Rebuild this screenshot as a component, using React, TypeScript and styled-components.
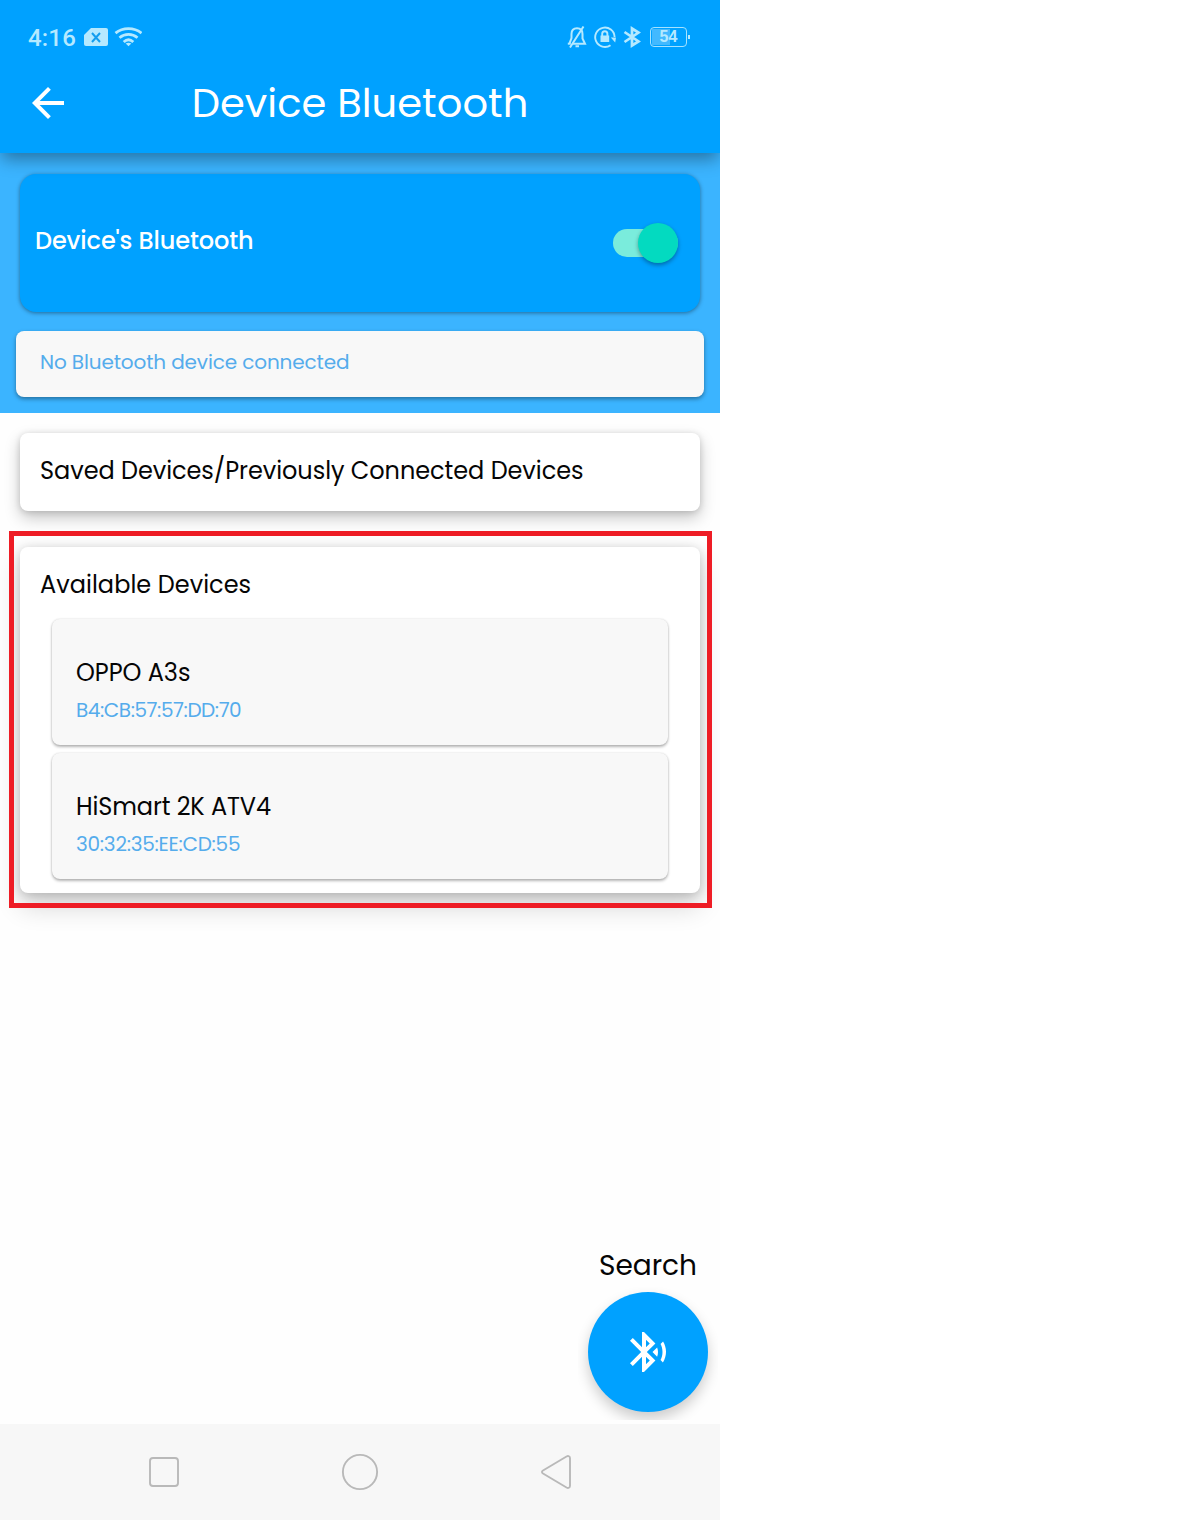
import React from "react";
import styled, { createGlobalStyle } from "styled-components";

const GlobalStyle = createGlobalStyle`
  * { box-sizing: border-box; }
  body { margin: 0; background: #fff; }
`;

const Screen = styled.div`
  width: 720px;
  height: 1520px;
  display: flex;
  flex-direction: column;
  overflow: hidden;
  background: #fefefe;
  color: #050505;
  font-family: Poppins, Inter, "Open Sans", sans-serif;
`;

const Header = styled.header`
  position: relative;
  z-index: 1;
  flex: none;
  height: 153px;
  background: #00a1ff;
  box-shadow: 0 8px 16px -2px rgba(0, 0, 0, 0.36);
`;

const StatusBar = styled.div`
  height: 74px;
  padding: 0 30px 0 28px;
  display: flex;
  align-items: center;
  justify-content: space-between;
  color: #b5e9ff;
`;

const StatusGroup = styled.div<{ $gap: number }>`
  display: flex;
  align-items: center;
  gap: ${(p) => p.$gap}px;
`;

const Clock = styled.span`
  width: 49px;
  font: 500 24px/30px Roboto, sans-serif;
  letter-spacing: 0.2px;
  margin-right: 1px;
  padding-top: 2px;
`;

const Battery = styled.div`
  display: flex;
  align-items: center;
  gap: 1px;
  margin-left: 2px;
`;

const BatteryCell = styled.div`
  width: 37px;
  height: 20px;
  border: 1px solid #a5e2ff;
  border-radius: 4px;
  background: linear-gradient(90deg, #42b9ff 18px, transparent 18px) 1px 1px / 34px 16px no-repeat;
  font: 700 16px/18px "Liberation Sans", sans-serif;
  text-align: center;
`;

const BatteryTip = styled.div`
  width: 2px;
  height: 4px;
  background: #b5e9ff;
`;

const TitleBar = styled.div`
  display: grid;
  grid-template-columns: 96px 1fr 96px;
  height: 58px;
  align-items: center;
`;

const BackButton = styled.button`
  display: flex;
  justify-content: center;
  border: 0;
  padding: 0;
  background: none;
  color: #fff;
`;

const Label = styled.span<{ $size: number; $spacing?: number; $color?: string; $weight?: number }>`
  display: block;
  white-space: nowrap;
  font-size: ${(p) => p.$size}px;
  line-height: 1.4;
  letter-spacing: ${(p) => p.$spacing ?? 0}px;
  color: ${(p) => p.$color ?? "#050505"};
  font-weight: ${(p) => p.$weight ?? 400};
`;

const TitleSlot = styled.div`
  display: flex;
  justify-content: center;
`;

const Hero = styled.section`
  flex: none;
  height: 260px;
  padding: 21px 16px 0;
  background: #3bb4ff;
`;

const ToggleCard = styled.div`
  height: 138px;
  margin: 0 4px 19px 4px;
  padding: 0 22px 0 15px;
  display: flex;
  align-items: center;
  justify-content: space-between;
  border-radius: 16px;
  background: #00a1ff;
  box-shadow: 0 1px 4px rgba(0, 0, 0, 0.42);
`;

const ToggleText = styled.div`
  padding-bottom: 5px;
`;

const SwitchTrack = styled.div`
  width: 65px;
  height: 28px;
  display: flex;
  align-items: center;
  justify-content: flex-end;
  border-radius: 14px;
  background: #7aecdc;
`;

const SwitchThumb = styled.div`
  flex: none;
  width: 40px;
  height: 40px;
  border-radius: 50%;
  background: #03dac0;
  box-shadow: 0 2px 4px rgba(0, 0, 0, 0.35);
`;

const ConnectionCard = styled.div`
  height: 66px;
  padding: 0 24px 4px;
  display: flex;
  align-items: center;
  border-radius: 8px;
  background: #f8f8f8;
  box-shadow: 0 2px 4px rgba(0, 0, 0, 0.38);
`;

const Content = styled.main`
  flex: 1;
  display: flex;
  flex-direction: column;
`;

const SavedCard = styled.section`
  height: 78px;
  margin: 20px 20px 0;
  padding: 0 20px 3px;
  display: flex;
  align-items: center;
  border-radius: 8px;
  background: #fff;
  box-shadow: 0 7px 16px rgba(0, 0, 0, 0.22), 0 1px 6px rgba(0, 0, 0, 0.15);
`;

const Highlight = styled.section`
  position: relative;
  height: 377px;
  margin: 20px 8px 0 9px;
  padding: 16px 12px 15px 11px;

  &::after {
    content: "";
    position: absolute;
    inset: 0;
    border: 5px solid #ee1c25;
    pointer-events: none;
  }
`;

const AvailableCard = styled.div`
  height: 346px;
  padding: 21px 32px 0;
  border-radius: 8px;
  background: #fff;
  box-shadow: 0 14px 26px rgba(0, 0, 0, 0.16), 0 2px 12px rgba(0, 0, 0, 0.2);
`;

const CardHeading = styled.h2`
  height: 51px;
  margin: 0 0 0 -12px;
`;

const DeviceList = styled.div`
  display: flex;
  flex-direction: column;
  gap: 8px;
`;

const DeviceCard = styled.div`
  height: 126px;
  padding: 37px 24px 0;
  border-radius: 8px;
  background: #f8f8f8;
  box-shadow: 0 2px 3px rgba(0, 0, 0, 0.28), 0 0 2px rgba(0, 0, 0, 0.15);
`;

const DeviceAddress = styled.div`
  margin-top: 6px;
`;

const SearchArea = styled.div`
  width: 120px;
  margin: auto 12px 12px auto;
  display: flex;
  flex-direction: column;
  align-items: center;
  gap: 7px;
`;

const SearchButton = styled.button`
  width: 120px;
  height: 120px;
  display: grid;
  place-items: center;
  border: 0;
  padding: 0;
  border-radius: 50%;
  background: #00a1ff;
  color: #fff;
  box-shadow: 0 7px 14px rgba(0, 0, 0, 0.2);
  clip-path: inset(-5px -10px -8px -10px);
`;

const NavBar = styled.nav`
  flex: none;
  height: 96px;
  padding: 0 66px;
  display: grid;
  grid-template-columns: repeat(3, 196px);
  place-items: center;
  background: #f7f7f7;
`;

const NoSim = () => (
  <svg width="24" height="18" viewBox="0 0 24 18">
    <path fill="currentColor" d="M7 0h15a2 2 0 0 1 2 2v14a2 2 0 0 1-2 2H2a2 2 0 0 1-2-2V7z" />
    <path d="m8 5 8 9m0-9-8 9" stroke="#139eef" strokeWidth="2" />
  </svg>
);

const Wifi = () => (
  <svg width="28" height="20" viewBox="0 0 28 20" fill="none" stroke="currentColor" strokeWidth="2.8">
    <path d="M1.500 6.200c7.300-6 18.700-6 26 0M5.500 10.700c5.200-4.400 12.800-4.400 18 0M9.700 14.900c3-2.800 6.600-2.800 9.600 0" />
    <path fill="currentColor" stroke="none" d="M11.700 16.600c1.800-1.300 3.800-1.300 5.600 0l-2.800 2.700z" />
  </svg>
);

const BellOff = () => (
  <svg width="20" height="22" viewBox="0 0 20 22" fill="none" stroke="currentColor" strokeWidth="2">
    <path d="M2.600 17.200 4.500 12V8c0-3.800 2-5.800 5.500-5.800s5.500 2 5.500 5.800v4.500l2.500 5.200H6" />
    <path d="M16.500 .5 3 21.500M8.500 20.200H12" />
    <path d="M.8 17.700h3" />
  </svg>
);

const RotationLock = () => (
  <svg width="22" height="22" viewBox="0 0 22 22" fill="none" stroke="currentColor" strokeWidth="1.900">
    <path d="M16.500 19.200A9.700 9.700 0 1 1 20.600 11" />
    <path d="M8.200 10V7.800a2.600 2.600 0 0 1 5.200 0V10" />
    <path fill="currentColor" stroke="none" d="M6.500 9.500h8.700V16H6.500zM16.800 11.500H22l-.8 5z" />
  </svg>
);

const StatusBluetooth = () => (
  <svg width="18" height="22" viewBox="0 0 18 22" fill="none" stroke="currentColor" strokeWidth="2.700">
    <path d="m1.500 6 14 9.500L9 19.500v-17l6.500 4L1.500 16" />
  </svg>
);

const BackArrow = () => (
  <svg width="48" height="48" viewBox="0 0 24 24" fill="currentColor">
    <path d="M20 11H7.830l5.590-5.590L12 4l-8 8 8 8 1.410-1.410L7.830 13H20z" />
  </svg>
);

const BluetoothSearch = () => (
  <svg width="48" height="48" viewBox="0 0 24 24" fill="currentColor">
    <path d="M14.240 12.010l2.320 2.320c.28-.72.44-1.510.44-2.330 0-.82-.16-1.590-.43-2.310l-2.330 2.320zm5.290-5.300l-1.260 1.260c.63 1.210.98 2.570.98 4.020s-.36 2.820-.98 4.020l1.200 1.200c.97-1.540 1.540-3.360 1.540-5.310-.01-1.890-.55-3.670-1.480-5.190zm-3.820 1L10 2H9v7.590L4.410 5 3 6.410 8.590 12 3 17.590 4.410 19 9 14.410V22h1l5.710-5.710-4.300-4.290 4.300-4.290zM11 5.830l1.880 1.880L11 9.590V5.830zm1.880 10.460L11 18.170v-3.760l1.880 1.880z" />
  </svg>
);

const NavIcon = ({ children }: { children: React.ReactNode }) => (
  <svg width="38" height="38" viewBox="0 0 38 38" fill="none" stroke="#b9b9b9" strokeWidth="1.900" strokeLinejoin="round">
    {children}
  </svg>
);

const devices = [
  { name: "OPPO A3s", address: "B4:CB:57:57:DD:70", nameSpacing: -0.05, addressSpacing: -0.43 },
  { name: "HiSmart 2K ATV4", address: "30:32:35:EE:CD:55", nameSpacing: -0.12, addressSpacing: -0.25 },
];

export default function App() {
  return (
    <>
      <GlobalStyle />
      <Screen>
        <Header>
          <StatusBar>
            <StatusGroup $gap={6}>
              <Clock>4:16</Clock>
              <NoSim />
              <Wifi />
            </StatusGroup>
            <StatusGroup $gap={7}>
              <BellOff />
              <RotationLock />
              <StatusBluetooth />
              <Battery>
                <BatteryCell>54</BatteryCell>
                <BatteryTip />
              </Battery>
            </StatusGroup>
          </StatusBar>
          <TitleBar>
            <BackButton aria-label="Back"><BackArrow /></BackButton>
            <TitleSlot>
              <Label $size={40} $spacing={0.05} $color="#fff">Device Bluetooth</Label>
            </TitleSlot>
          </TitleBar>
        </Header>
        <Hero>
          <ToggleCard>
            <ToggleText>
              <Label $size={24} $weight={500} $color="#fff" $spacing={-0.1}>Device's Bluetooth</Label>
            </ToggleText>
            <SwitchTrack><SwitchThumb /></SwitchTrack>
          </ToggleCard>
          <ConnectionCard>
            <Label $size={20} $color="#55acec" $spacing={-0.13}>No Bluetooth device connected</Label>
          </ConnectionCard>
        </Hero>
        <Content>
          <SavedCard>
            <Label $size={24} $spacing={-0.05}>Saved Devices/Previously Connected Devices</Label>
          </SavedCard>
          <Highlight>
            <AvailableCard>
              <CardHeading><Label $size={24} $spacing={0.04}>Available Devices</Label></CardHeading>
              <DeviceList>
                {devices.map((d) => (
                  <DeviceCard key={d.address}>
                    <Label $size={24} $spacing={d.nameSpacing}>{d.name}</Label>
                    <DeviceAddress>
                      <Label $size={20} $spacing={d.addressSpacing} $color="#55acec">{d.address}</Label>
                    </DeviceAddress>
                  </DeviceCard>
                ))}
              </DeviceList>
            </AvailableCard>
          </Highlight>
          <SearchArea>
            <Label $size={28} $spacing={0}>Search</Label>
            <SearchButton aria-label="Search for devices"><BluetoothSearch /></SearchButton>
          </SearchArea>
        </Content>
        <NavBar>
          <NavIcon><rect x="5" y="5" width="28" height="28" rx="3" /></NavIcon>
          <NavIcon><circle cx="19" cy="19" r="17.100" /></NavIcon>
          <NavIcon><path d="M6 17.500 29.500 3.500c1.800-1 3.500-.2 3.500 1.700v27.600c0 1.900-1.700 2.700-3.500 1.700L6 20.500c-1.400-.9-1.400-2.100 0-3z" /></NavIcon>
        </NavBar>
      </Screen>
    </>
  );
}
